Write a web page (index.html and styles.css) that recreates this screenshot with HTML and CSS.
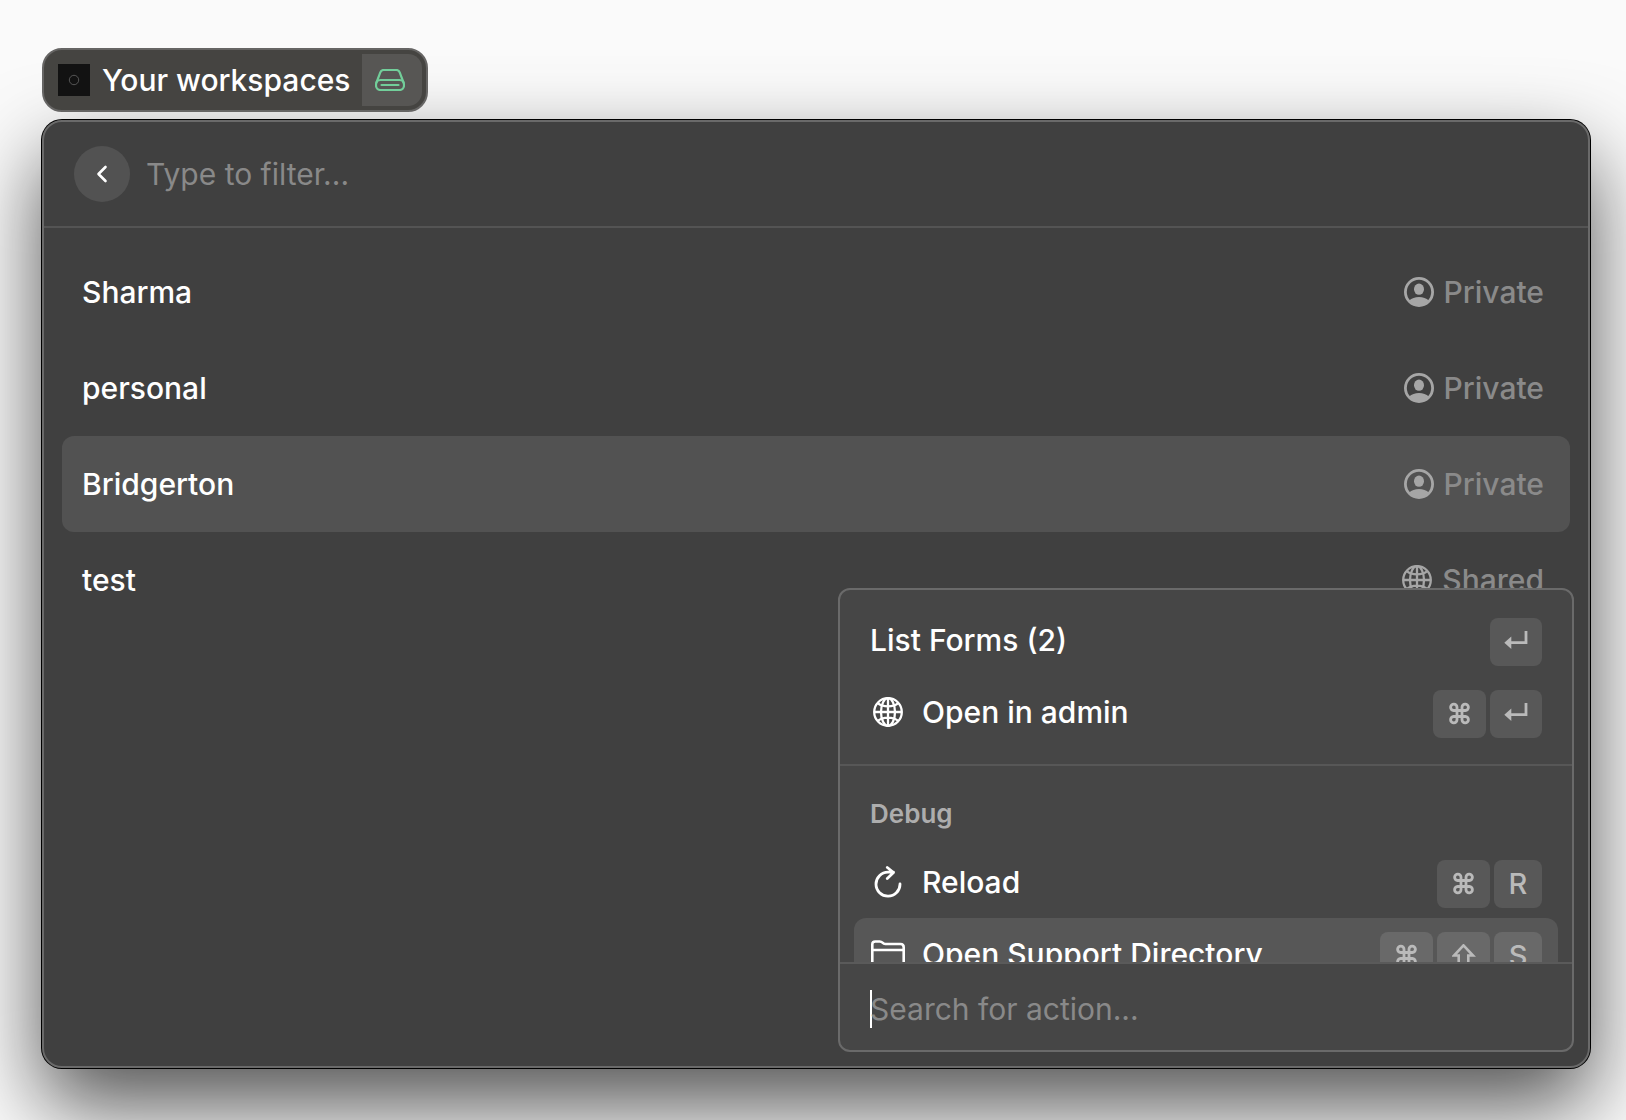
FILE: index.html
```html
<!DOCTYPE html>
<html lang="en">
<head>
<meta charset="utf-8">
<meta name="viewport" content="width=device-width, initial-scale=1">
<title>Your workspaces</title>
<link rel="stylesheet" href="styles.css">
</head>
<body>
<svg class="sprite" aria-hidden="true">
  <symbol id="person" viewBox="0 0 30 30">
    <circle cx="15" cy="15" r="13.6" fill="none" stroke="currentColor" stroke-width="2.800"/>
    <ellipse cx="15" cy="12.2" rx="5" ry="5.6" fill="currentColor"/>
    <path d="M5.2 23.4C7.6 21.3 11 20 15 20s7.400 1.300 9.800 3.400C22.500 26.400 19 28.600 15 28.600S7.500 26.400 5.200 23.400z" fill="currentColor"/>
  </symbol>
  <symbol id="globe" viewBox="0 0 30 30">
    <g fill="none" stroke="currentColor" stroke-width="2.300">
      <circle cx="15" cy="15" r="13.800"/>
      <ellipse cx="15" cy="15" rx="7" ry="13.800"/>
      <path d="M15 1v28M1 15h28M4.500 5.800C7 8 10.700 9.300 15 9.300S23 8 25.500 5.800M4.500 24.200C7 22 10.700 20.700 15 20.700s8 1.300 10.500 3.500"/>
    </g>
  </symbol>
  <symbol id="command" viewBox="0 0 24 24">
    <path d="M9 8.500h5v6H9zM9 8.500H5.600A3.200 3.200 0 1 1 9 5.300zM14 8.500V5.300A3.200 3.200 0 1 1 17.400 8.500zM14 14.500h3.400A3.200 3.200 0 1 1 14 17.700zM9 14.500v3.200A3.200 3.200 0 1 1 5.600 14.500z" fill="none" stroke="currentColor" stroke-width="2.800"/>
  </symbol>
  <symbol id="return" viewBox="0 0 24 24">
    <path d="M22 1v11.700H6" fill="none" stroke="currentColor" stroke-width="2.800"/>
    <path d="M.3 12.700l7-6.200v12.400z" fill="currentColor"/>
  </symbol>
  <symbol id="shift" viewBox="0 0 24 24">
    <path d="M11.500 1.400L21 11.500h-4.700V22H6.700V11.500H2z" fill="none" stroke="currentColor" stroke-width="2.600"/>
  </symbol>
</svg>

<main class="page">
  <header class="badge">
    <svg class="badge-logo" viewBox="0 0 32 32" aria-hidden="true">
      <rect width="32" height="32" fill="#121212"/>
      <circle cx="16" cy="16" r="4.700" fill="none" stroke="#555" stroke-width="1"/>
    </svg>
    <h1 class="badge-title">Your workspaces</h1>
    <span class="badge-mode">
      <svg width="30" height="22" viewBox="0 0 30 22" fill="none" stroke="#72ce9a" stroke-width="2.200" stroke-linecap="round" stroke-linejoin="round" aria-hidden="true">
        <path d="M1.500 13.500L5.300 3.300Q6.200 1 8.600 1h12.800q2.400 0 3.300 2.300l3.800 10.200"/>
        <rect x="1" y="11" width="28" height="10" rx="4.500"/>
        <path d="M6.500 16h17"/>
      </svg>
    </span>
  </header>

  <section class="window">
    <div class="search">
      <button class="back" type="button" aria-label="Back">
        <svg width="12" height="18" viewBox="0 0 12 18" fill="none" stroke="currentColor" stroke-width="2.600" stroke-linecap="round" stroke-linejoin="round"><path d="M9.500 2L2.500 9l7 7"/></svg>
      </button>
      <input class="field" type="text" placeholder="Type to filter..." aria-label="Filter workspaces">
    </div>

    <div class="list">
      <button class="row" type="button"><span>Sharma</span><span class="tag"><svg class="icon"><use href="#person"/></svg><span>Private</span></span></button>
      <button class="row" type="button"><span>personal</span><span class="tag"><svg class="icon"><use href="#person"/></svg><span>Private</span></span></button>
      <button class="row selected" type="button"><span>Bridgerton</span><span class="tag"><svg class="icon"><use href="#person"/></svg><span>Private</span></span></button>
      <button class="row" type="button"><span>test</span><span class="tag"><svg class="icon"><use href="#globe"/></svg><span>Shared</span></span></button>
    </div>

    <aside class="actions">
      <div class="actions-scroll">
        <div class="group">
          <button class="action" type="button">
            <span class="label">List Forms (2)</span>
            <span class="keys"><kbd class="enter"><svg class="glyph"><use href="#return"/></svg></kbd></span>
          </button>
          <button class="action" type="button">
            <span class="lead"><svg class="icon"><use href="#globe"/></svg></span>
            <span class="label">Open in admin</span>
            <span class="keys"><kbd class="wide"><svg class="glyph"><use href="#command"/></svg></kbd><kbd class="enter"><svg class="glyph"><use href="#return"/></svg></kbd></span>
          </button>
        </div>
        <div class="group debug">
          <h2 class="group-title">Debug</h2>
          <button class="action" type="button">
            <span class="lead"><svg width="28" height="32" viewBox="0 0 28 32" fill="none" stroke="currentColor" stroke-width="2.800" stroke-linecap="round" stroke-linejoin="round"><path d="M26 18A12 12 0 1 1 14 6.200h5.500M13.300 1.500l6.200 5-6.200 6"/></svg></span>
            <span class="label">Reload</span>
            <span class="keys"><kbd class="wide"><svg class="glyph"><use href="#command"/></svg></kbd><kbd>R</kbd></span>
          </button>
          <button class="action selected" type="button">
            <span class="lead"><svg width="34" height="28" viewBox="0 0 34 28" fill="none" stroke="currentColor" stroke-width="2.600" stroke-linejoin="round"><path d="M1.300 23V4.500Q1.300 1.500 4.200 1.500h4.500q1.600 0 2.800 1.200t2.800 1.300H29.500q3.200 0 3.200 3.300V23q0 3.300-3.300 3.300H4.500Q1.300 26.300 1.300 23zM1.200 10h31.600"/></svg></span>
            <span class="label">Open Support Directory</span>
            <span class="keys"><kbd class="wide"><svg class="glyph"><use href="#command"/></svg></kbd><kbd class="wide"><svg class="glyph"><use href="#shift"/></svg></kbd><kbd>S</kbd></span>
          </button>
        </div>
      </div>
      <div class="actions-search">
        <span class="caret"></span>
        <input class="field" type="text" placeholder="Search for action..." aria-label="Search for action">
      </div>
    </aside>
  </section>
</main>
</body>
</html>
```
FILE: styles.css
```css
* { box-sizing: border-box; }

body {
  margin: 0;
  background: #fafafa;
  color: #fff;
  font: 500 30px/36px Inter, "Liberation Sans", sans-serif;
}

button, input {
  margin: 0;
  padding: 0;
  border: 0;
  background: none;
  color: inherit;
  font: inherit;
}

button { text-align: left; }
svg { display: block; flex: none; }
.sprite { position: absolute; width: 0; height: 0; }

.page {
  display: flex;
  flex-direction: column;
  align-items: flex-start;
  gap: 8px;
  min-height: 100vh;
  padding: 48px 36px 52px 42px;
  overflow: hidden;
}

/* Title badge */
.badge {
  z-index: 1;
  display: flex;
  align-items: center;
  height: 64px;
  padding: 4px 4px 4px 14px;
  border: 2px solid #666564;
  border-radius: 20px;
  background: #454441;
}
.badge-logo { width: 32px; height: 32px; }
.badge-title { margin: 0 11px 0 12px; font: inherit; }
.badge-mode {
  display: flex;
  align-items: center;
  justify-content: center;
  width: 60px;
  height: 52px;
  padding-right: 4px;
  border-radius: 0 14px 14px 0;
  background: #575654;
}

/* Main window */
.window {
  position: relative;
  flex: 1;
  align-self: stretch;
  border: 2px solid #6a6a6a;
  border-radius: 20px;
  background: #404040;
  box-shadow: 0 0 0 1px #000, 0 37px 84px rgba(0, 0, 0, .68);
}
.search {
  display: flex;
  align-items: center;
  gap: 16px;
  height: 106px;
  padding: 0 30px;
  border-bottom: 2px solid #545454;
}
.back {
  display: flex;
  align-items: center;
  justify-content: center;
  width: 56px;
  height: 56px;
  border-radius: 50%;
  background: #525252;
}
.field {
  flex: 1;
  min-width: 0;
  height: 40px;
  outline: 0;
  font-weight: 400;
}
.field::placeholder { color: #898989; opacity: 1; }

.list { padding: 16px 18px; }
.row {
  display: flex;
  align-items: center;
  justify-content: space-between;
  width: 100%;
  height: 96px;
  padding: 0 26px 0 20px;
  border-radius: 12px;
}
.row.selected { background: #525252; }
.tag {
  display: flex;
  align-items: center;
  gap: 10px;
  color: #8a8a8a;
}
.icon { width: 30px; height: 30px; }
.tag .icon { color: #a6a6a6; }

/* Action menu */
.actions {
  position: absolute;
  right: 14px;
  bottom: 14px;
  width: 736px;
  border: 2px solid #6a6a6a;
  border-radius: 12px;
  background: #464646;
}
.actions-scroll { height: 372px; overflow: hidden; }
.group { padding: 14px 14px 16px; }
.debug { padding-top: 0; border-top: 2px solid #575757; }
.group-title {
  margin: 0;
  padding: 32px 16px 16px;
  color: #adadad;
  font-size: 26px;
  font-weight: 600;
  line-height: 32px;
}
.action {
  display: flex;
  align-items: center;
  width: 100%;
  height: 72px;
  padding: 0 16px;
  border-radius: 12px;
}
.action.selected { background: #575757; }
.lead {
  display: flex;
  justify-content: center;
  width: 36px;
  margin-right: 16px;
}
.label { flex: 1; }
.keys { display: flex; gap: 4px; padding-top: 4px; }
kbd {
  display: flex;
  align-items: center;
  justify-content: center;
  width: 48px;
  height: 48px;
  border-radius: 8px;
  background: #585858;
  color: #bababa;
  font: inherit;
  font-size: 29px;
}
.wide { width: 53px; }
.enter { width: 52px; }
.selected kbd { background: #696969; }
.glyph { width: 24px; height: 24px; }

.actions-search {
  display: flex;
  align-items: center;
  height: 88px;
  padding: 4px 30px 0;
  border-top: 2px solid #5a5a5a;
}
.caret { width: 2px; height: 38px; margin-right: -2px; background: #fff; }
```
